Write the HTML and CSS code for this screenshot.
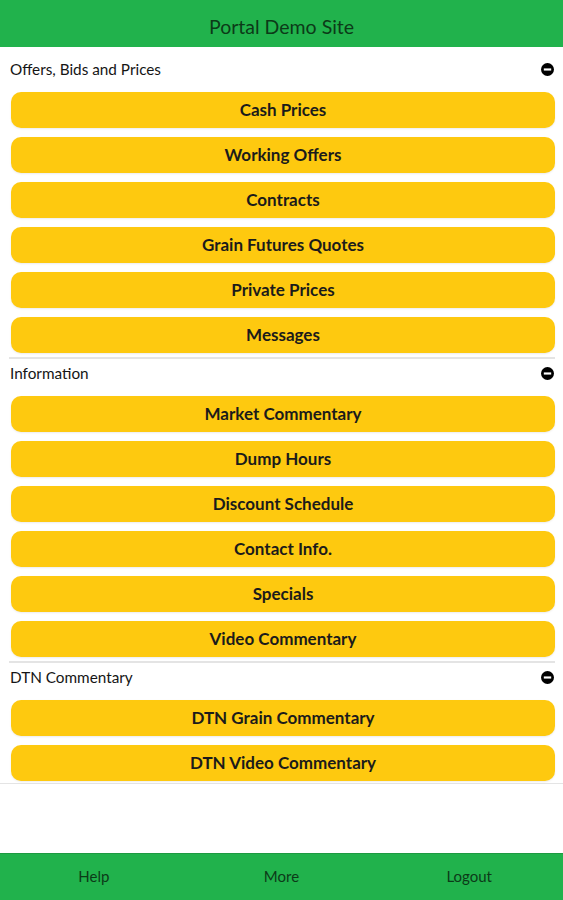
FILE: index.html
```html
<!DOCTYPE html>
<html lang="en">
<head>
    <meta charset="UTF-8">
    <meta name="viewport" content="width=device-width, initial-scale=1.0">
    <title>Portal Demo Site</title>
    <link rel="stylesheet" href="styles.css">
</head>
<body>
    <div class="page">
        <div class="header">
            <h1>Portal Demo Site</h1>
        </div>

        <div class="content">
            <div class="section">
                <div class="section-head">
                    <span>Offers, Bids and Prices</span>
                    <svg class="toggle" viewBox="0 0 12 12"><circle cx="6" cy="6" r="6"/><rect x="2.6" y="5" width="6.8" height="2" fill="#fff"/></svg>
                </div>
                <div class="buttons">
                    <a class="btn">Cash Prices</a>
                    <a class="btn">Working Offers</a>
                    <a class="btn">Contracts</a>
                    <a class="btn">Grain Futures Quotes</a>
                    <a class="btn">Private Prices</a>
                    <a class="btn">Messages</a>
                </div>
            </div>

            <div class="section">
                <div class="section-head">
                    <span>Information</span>
                    <svg class="toggle" viewBox="0 0 12 12"><circle cx="6" cy="6" r="6"/><rect x="2.6" y="5" width="6.8" height="2" fill="#fff"/></svg>
                </div>
                <div class="buttons">
                    <a class="btn">Market Commentary</a>
                    <a class="btn">Dump Hours</a>
                    <a class="btn">Discount Schedule</a>
                    <a class="btn">Contact Info.</a>
                    <a class="btn">Specials</a>
                    <a class="btn">Video Commentary</a>
                </div>
            </div>

            <div class="section last">
                <div class="section-head">
                    <span>DTN Commentary</span>
                    <svg class="toggle" viewBox="0 0 12 12"><circle cx="6" cy="6" r="6"/><rect x="2.6" y="5" width="6.8" height="2" fill="#fff"/></svg>
                </div>
                <div class="buttons">
                    <a class="btn">DTN Grain Commentary</a>
                    <a class="btn">DTN Video Commentary</a>
                </div>
            </div>
        </div>

        <div class="footer">
            <a>Help</a>
            <a>More</a>
            <a>Logout</a>
        </div>
    </div>
</body>
</html>
```

FILE: styles.css
```css
body {
    margin: 0;
    font-family: Lato, "Open Sans", sans-serif;
    background-color: #fff;
    color: #111;
}
.page {
    height: 900px;
    display: flex;
    flex-direction: column;
}
.header {
    height: 47px;
    box-sizing: border-box;
    padding-top: 6px;
    background-color: #21b24c;
    display: flex;
    align-items: center;
    justify-content: center;
}
.header h1 {
    margin: 0;
    font-size: 19.5px;
    font-weight: normal;
    color: #0c3a18;
}
.content {
    flex: 1;
    padding-top: 8px;
}
.section {
    padding-bottom: 4px;
    margin: 0 8px 0 9px;
    border-bottom: 2px solid #e4e4e4;
}
.section.last {
    margin: 0;
    padding: 0 8px 2px 9px;
    border-bottom-width: 1px;
}
.section-head {
    height: 28px;
    display: flex;
    align-items: center;
    justify-content: space-between;
    padding: 0 0 0 1px;
    margin-bottom: 9px;
    font-size: 15.3px;
    color: #151515;
}
.toggle {
    width: 13px;
    height: 13px;
    fill: #000;
    margin-right: 1px;
}
.buttons {
    display: flex;
    flex-direction: column;
    gap: 9px;
    padding: 0 0 0 2px;
}
.btn {
    height: 36px;
    display: flex;
    align-items: center;
    justify-content: center;
    padding-bottom: 2px;
    box-sizing: border-box;
    background-color: #fec90f;
    border-radius: 10px;
    font-size: 17px;
    font-weight: bold;
    color: #1b1b1b;
    box-shadow: 0 1px 2px rgba(0,0,0,0.08);
}
.footer {
    height: 47px;
    box-sizing: border-box;
    padding-bottom: 3px;
    background-color: #21b24c;
    border-top: 1px solid #1d9a41;
    display: grid;
    grid-template-columns: repeat(3, 1fr);
    align-items: center;
    text-align: center;
}
.footer a {
    font-size: 15px;
    color: #0c3a18;
}
```
